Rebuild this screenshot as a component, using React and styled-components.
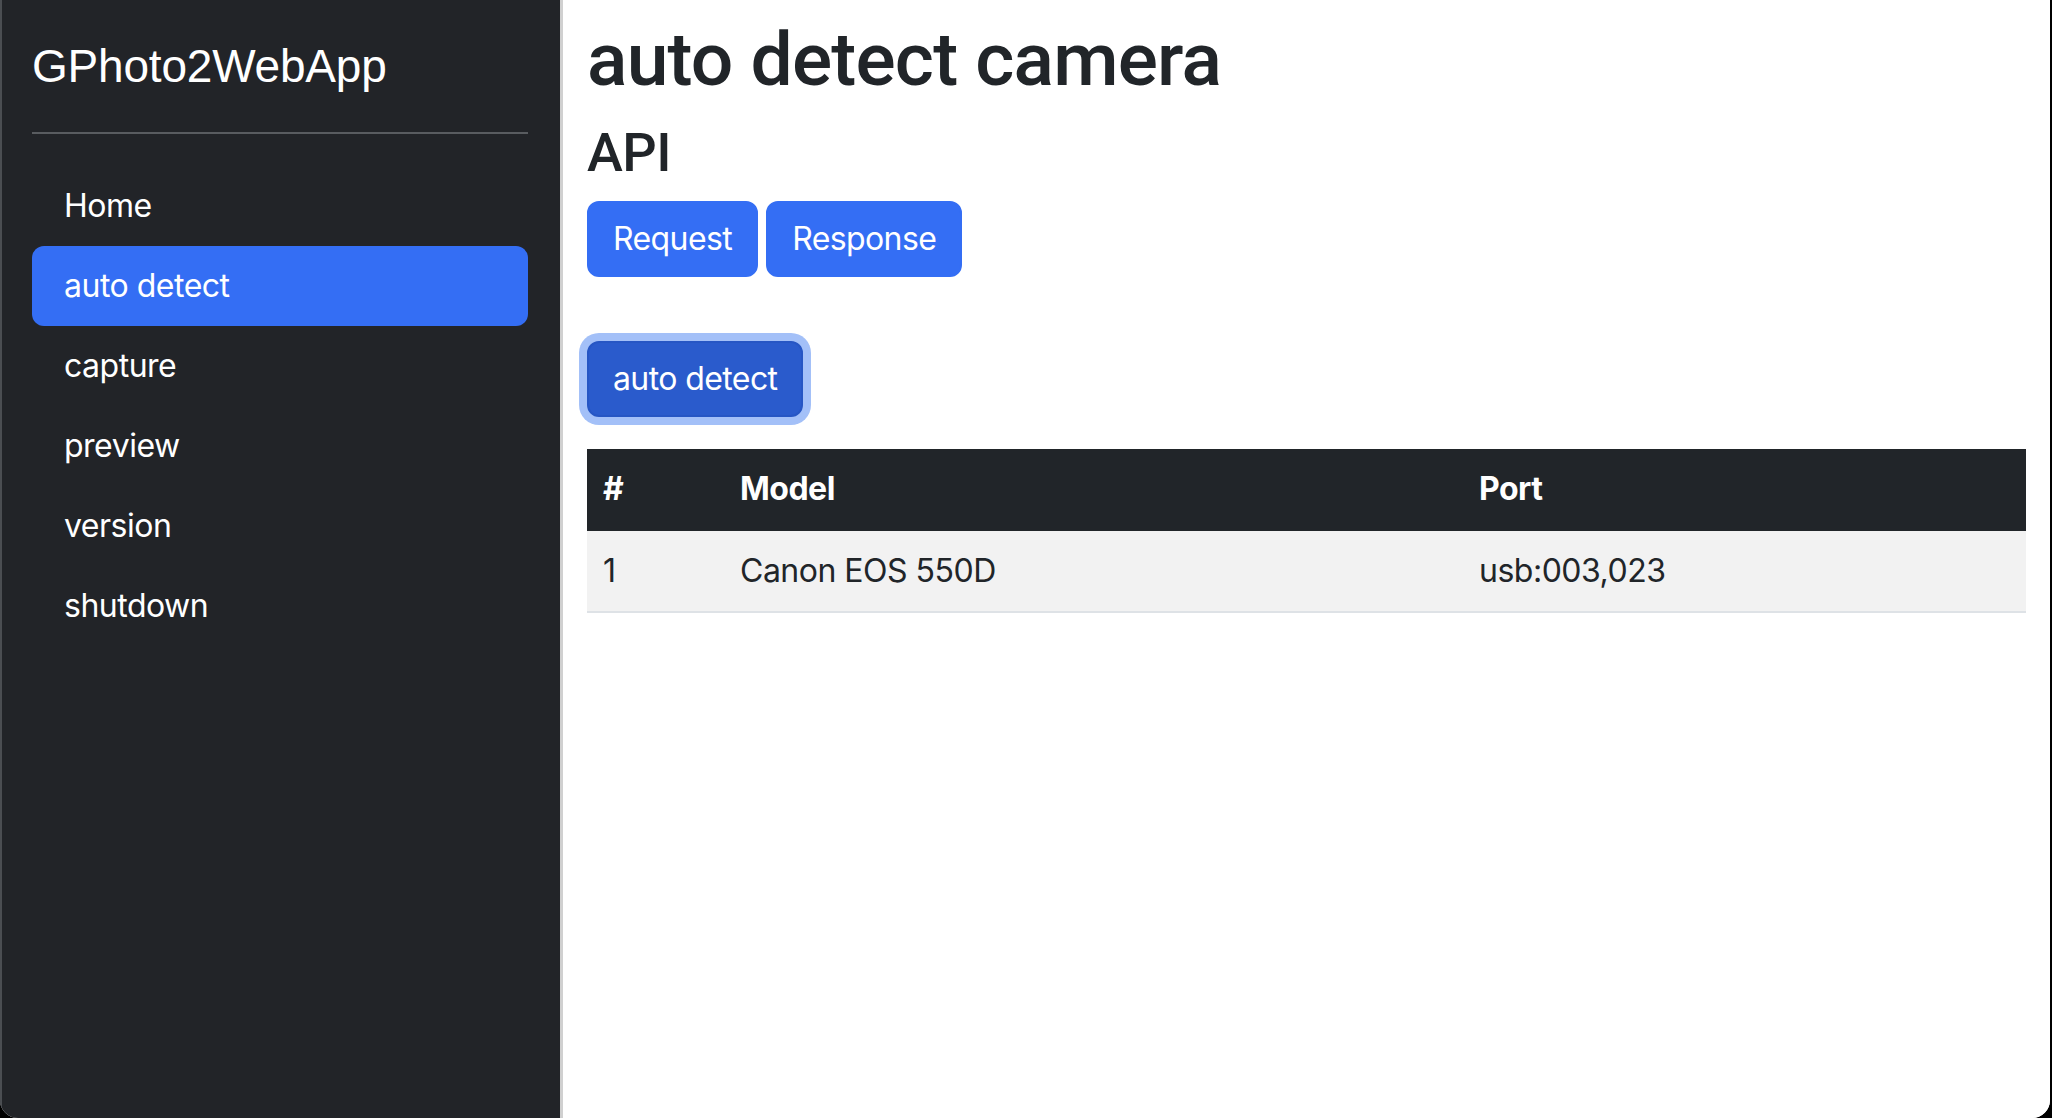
import React from "react";
import styled, { createGlobalStyle } from "styled-components";

const Global = createGlobalStyle`
  html, body { margin: 0; padding: 0; background: #000; }
  body {
    font-family: Inter, "Noto Sans", "Liberation Sans", Arial, sans-serif;
    color: #212529;
    letter-spacing: -0.5px;
  }
  * { box-sizing: border-box; }
`;

const Frame = styled.div`
  display: flex;
  width: 2050px;
  height: 1118px;
  overflow: hidden;
  border-bottom-left-radius: 18px;
  border-bottom-right-radius: 18px;
  background: #fff;
`;

const Sidebar = styled.aside`
  flex: 0 0 560px;
  display: flex;
  flex-direction: column;
  padding: 32px 32px 32px 30px;
  background: #222428;
  color: #fff;
  border-left: 2px solid #4b4e52;
`;

const Brand = styled.div`
  font-family: "Liberation Sans", Arial, sans-serif;
  font-size: 46px;
  line-height: 68px;
  letter-spacing: -0.2px;
  color: #fff;
`;

const Rule = styled.hr`
  margin: 32px 0;
  border: 0;
  border-top: 2px solid #595c60;
  height: 0;
`;

const NavList = styled.nav`
  display: flex;
  flex-direction: column;
`;

const NavItem = styled.a`
  display: block;
  padding: 16px 32px;
  font-size: 32px;
  line-height: 48px;
  color: #fff;
  text-decoration: none;
  border-radius: 12px;
  background: ${(p) => (p.$active ? "#346ef4" : "transparent")};
`;

const Divider = styled.div`
  flex: 0 0 3px;
  background: #d0d0d0;
`;

const Main = styled.main`
  flex: 1;
  padding: 14px 24px 0 24px;
  background: #fff;
`;

const Title = styled.h1`
  margin: 0 0 16px;
  font-family: Roboto, Inter, sans-serif;
  font-size: 75px;
  line-height: 90px;
  font-weight: 500;
  color: #212529;
  letter-spacing: -0.8px;
`;

const SubTitle = styled.h3`
  margin: 0 0 16px;
  font-family: Roboto, Inter, sans-serif;
  font-size: 54px;
  line-height: 65px;
  font-weight: 500;
  letter-spacing: -0.5px;
  color: #212529;
`;

const ButtonRow = styled.div`
  display: flex;
  gap: 8px;
  margin-bottom: ${(p) => p.$mb || 0}px;
`;

const Button = styled.button`
  font-family: inherit;
  font-size: 32px;
  line-height: 48px;
  letter-spacing: -0.6px;
  padding: 12px 24px;
  color: #fff;
  background: ${(p) => (p.$active ? "#2a5bcc" : "#346ef4")};
  border: 2px solid ${(p) => (p.$active ? "#2656c4" : "#346ef4")};
  border-radius: 12px;
  box-shadow: ${(p) => (p.$active ? "0 0 0 8px #a3c0f8" : "none")};
  cursor: pointer;
`;

const Table = styled.table`
  width: 100%;
  margin-top: 32px;
  border-collapse: collapse;
  font-size: 32px;
  line-height: 48px;
`;

const HeadRow = styled.tr`
  background: #212529;
  color: #fff;
`;

const Th = styled.th`
  text-align: left;
  font-weight: 700;
  padding: 16px 16px 18px;
  width: ${(p) => p.$w || "auto"};
`;

const BodyRow = styled.tr`
  background: #f2f2f2;
  border-bottom: 2px solid #dee2e6;
`;

const Td = styled.td`
  padding: 16px;
  color: #212529;
`;

const navItems = ["Home", "auto detect", "capture", "preview", "version", "shutdown"];

export default function App() {
  return (
    <>
      <Global />
      <Frame>
        <Sidebar>
          <Brand>GPhoto2WebApp</Brand>
          <Rule />
          <NavList>
            {navItems.map((n) => (
              <NavItem key={n} href="#" $active={n === "auto detect"}>
                {n}
              </NavItem>
            ))}
          </NavList>
        </Sidebar>
        <Divider />
        <Main>
          <Title>auto detect camera</Title>
          <SubTitle>API</SubTitle>
          <ButtonRow $mb={64}>
            <Button>Request</Button>
            <Button>Response</Button>
          </ButtonRow>
          <ButtonRow>
            <Button $active>auto detect</Button>
          </ButtonRow>
          <Table>
            <thead>
              <HeadRow>
                <Th $w="137px">#</Th>
                <Th $w="739px">Model</Th>
                <Th>Port</Th>
              </HeadRow>
            </thead>
            <tbody>
              <BodyRow>
                <Td>1</Td>
                <Td>Canon EOS 550D</Td>
                <Td>usb:003,023</Td>
              </BodyRow>
            </tbody>
          </Table>
        </Main>
      </Frame>
    </>
  );
}
